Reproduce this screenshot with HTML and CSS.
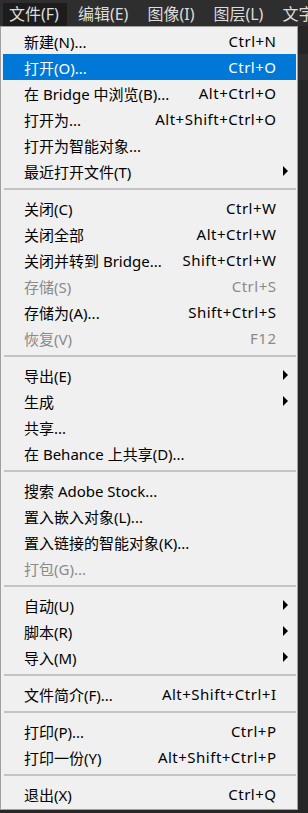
FILE: index.html
```html
<!DOCTYPE html>
<html lang="zh-CN">
<head>
    <meta charset="UTF-8">
    <meta name="viewport" content="width=device-width, initial-scale=1.0">
    <title>文件菜单</title>
    <link rel="stylesheet" href="styles.css">
</head>
<body>
    <div class="menubar">
        <div class="menubar-item active">文件(F)</div>
        <div class="menubar-item">编辑(E)</div>
        <div class="menubar-item">图像(I)</div>
        <div class="menubar-item">图层(L)</div>
        <div class="menubar-item">文字(Y)</div>
    </div>
    <div class="workspace">
        <div class="menu">
            <div class="item"><span class="label">新建(N)...</span><span class="key">Ctrl+N</span></div>
            <div class="item selected"><span class="label">打开(O)...</span><span class="key">Ctrl+O</span></div>
            <div class="item"><span class="label">在 Bridge 中浏览(B)...</span><span class="key">Alt+Ctrl+O</span></div>
            <div class="item"><span class="label">打开为...</span><span class="key">Alt+Shift+Ctrl+O</span></div>
            <div class="item"><span class="label">打开为智能对象...</span></div>
            <div class="item"><span class="label">最近打开文件(T)</span><span class="arrow"></span></div>
            <div class="separator"></div>
            <div class="item"><span class="label">关闭(C)</span><span class="key">Ctrl+W</span></div>
            <div class="item"><span class="label">关闭全部</span><span class="key">Alt+Ctrl+W</span></div>
            <div class="item"><span class="label">关闭并转到 Bridge...</span><span class="key">Shift+Ctrl+W</span></div>
            <div class="item disabled"><span class="label">存储(S)</span><span class="key">Ctrl+S</span></div>
            <div class="item"><span class="label">存储为(A)...</span><span class="key">Shift+Ctrl+S</span></div>
            <div class="item disabled"><span class="label">恢复(V)</span><span class="key">F12</span></div>
            <div class="separator"></div>
            <div class="item"><span class="label">导出(E)</span><span class="arrow"></span></div>
            <div class="item"><span class="label">生成</span><span class="arrow"></span></div>
            <div class="item"><span class="label">共享...</span></div>
            <div class="item"><span class="label">在 Behance 上共享(D)...</span></div>
            <div class="separator"></div>
            <div class="item"><span class="label">搜索 Adobe Stock...</span></div>
            <div class="item"><span class="label">置入嵌入对象(L)...</span></div>
            <div class="item"><span class="label">置入链接的智能对象(K)...</span></div>
            <div class="item disabled"><span class="label">打包(G)...</span></div>
            <div class="separator"></div>
            <div class="item"><span class="label">自动(U)</span><span class="arrow"></span></div>
            <div class="item"><span class="label">脚本(R)</span><span class="arrow"></span></div>
            <div class="item"><span class="label">导入(M)</span><span class="arrow"></span></div>
            <div class="separator"></div>
            <div class="item"><span class="label">文件简介(F)...</span><span class="key">Alt+Shift+Ctrl+I</span></div>
            <div class="separator"></div>
            <div class="item"><span class="label">打印(P)...</span><span class="key">Ctrl+P</span></div>
            <div class="item"><span class="label">打印一份(Y)</span><span class="key">Alt+Shift+Ctrl+P</span></div>
            <div class="separator"></div>
            <div class="item"><span class="label">退出(X)</span><span class="key">Ctrl+Q</span></div>
        </div>
        <div class="side">
            <div class="side-bar"></div>
        </div>
    </div>
</body>
</html>
```

FILE: styles.css
```css
body {
    margin: 0;
    background-color: #262626;
    font-family: "Segoe UI", "Noto Sans", "Noto Sans CJK SC", sans-serif;
    width: 308px;
    height: 813px;
    overflow: hidden;
}
.menubar {
    display: flex;
    height: 26px;
    padding-left: 3px;
    padding-top: 3px;
    box-sizing: border-box;
    background-color: #2e2e2e;
    overflow: hidden;
}
.menubar-item {
    color: #dcdcdc;
    font-size: 16px;
    line-height: 23px;
    padding: 0 8px 0 6px;
    margin-right: 5px;
    white-space: nowrap;
}
.menubar-item.active {
    background-color: #1c1c1c;
}
.workspace {
    display: flex;
    align-items: flex-start;
}
.menu {
    width: 298px;
    flex-shrink: 0;
    box-sizing: border-box;
    background-color: #f0f0f0;
    border: 1px solid #a0a0a0;
    padding: 1px 1px 2px 2px;
}
.item {
    display: grid;
    grid-template-columns: 1fr auto 20px;
    align-items: center;
    height: 26px;
    padding-left: 21px;
    font-size: 15px;
    color: #000;
    white-space: nowrap;
}
.item.selected {
    background-color: #0078d7;
    color: #fff;
}
.item.disabled {
    color: #8a8a8a;
}
.label {
    grid-column: 1;
}
.key {
    grid-column: 2;
    letter-spacing: 0.5px;
    margin-right: -0.5px;
}
.arrow {
    grid-column: 3;
    width: 0;
    height: 0;
    margin-left: 7px;
    border-left: 5px solid #000;
    border-top: 5px solid transparent;
    border-bottom: 5px solid transparent;
}
.separator {
    height: 2px;
    margin: 4px 0 5px 1px;
    background-color: #c4c4c4;
}
.side {
    flex: 1;
}
.side-bar {
    height: 26px;
    margin-top: 28px;
    background-color: #2f2f2f;
}
```
